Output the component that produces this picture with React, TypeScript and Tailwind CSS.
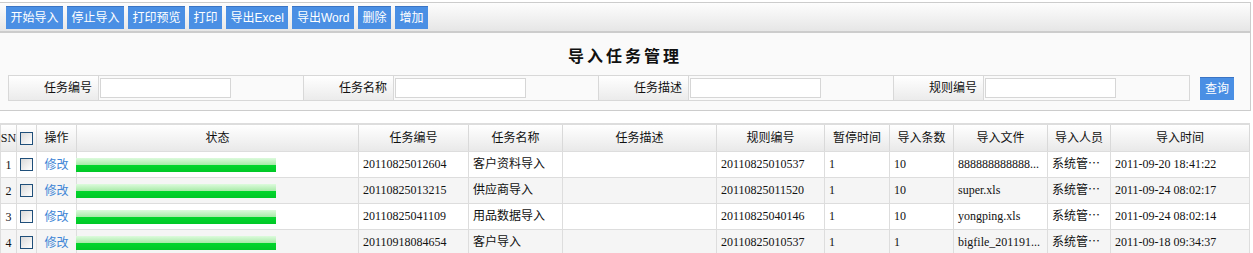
const toolButtons = ["开始导入", "停止导入", "打印预览", "打印", "导出Excel", "导出Word", "删除", "增加"];

const searchFields = ["任务编号", "任务名称", "任务描述", "规则编号"];

const columns = [
  { label: "SN", w: "w-[16px]" },
  { label: "", w: "w-[20px]" },
  { label: "操作", w: "w-[40px]" },
  { label: "状态", w: "w-[282px]" },
  { label: "任务编号", w: "w-[110px]" },
  { label: "任务名称", w: "w-[94px]" },
  { label: "任务描述", w: "w-[154px]" },
  { label: "规则编号", w: "w-[108px]" },
  { label: "暂停时间", w: "w-[65px]" },
  { label: "导入条数", w: "w-[64px]" },
  { label: "导入文件", w: "w-[94px]" },
  { label: "导入人员", w: "w-[63px]" },
  { label: "导入时间", w: "w-[139px]" },
];

// file and user names are already shortened the way the grid shows them
const rows = [
  { code: "20110825012604", name: "客户资料导入", rule: "20110825010537", pause: "1", count: "10", file: "888888888888...", user: "系统管⋯", time: "2011-09-20 18:41:22" },
  { code: "20110825013215", name: "供应商导入", rule: "20110825011520", pause: "1", count: "10", file: "super.xls", user: "系统管⋯", time: "2011-09-24 08:02:17" },
  { code: "20110825041109", name: "用品数据导入", rule: "20110825040146", pause: "1", count: "10", file: "yongping.xls", user: "系统管⋯", time: "2011-09-24 08:02:14" },
  { code: "20110918084654", name: "客户导入", rule: "20110825010537", pause: "1", count: "1", file: "bigfile_201191...", user: "系统管⋯", time: "2011-09-18 09:34:37" },
];

function CheckBox() {
  return (
    <div className="w-[13px] h-[13px] border border-[#1f4f7a] bg-[linear-gradient(135deg,#d9d9d9,#ffffff)]" />
  );
}

export default function App() {
  return (
    <div className="w-[1253px] h-[253px] overflow-hidden bg-white text-[12px] text-[#111] font-['Liberation_Sans','Noto_Sans_CJK_SC',sans-serif]">
      {/* toolbar */}
      <div className="mt-[2px] w-[1251px] h-[31px] border-t border-r border-b-2 border-[#cccccc] bg-[linear-gradient(to_bottom,#fdfdfd,#e6e6e6)] flex items-start gap-[4px] pl-[6px] pt-[3px]">
        {toolButtons.map((b) => (
          <div
            key={b}
            className="h-[23px] px-[4.5px] flex items-center bg-[#4a8fe4] border-t border-[#3a74c4] text-white leading-none"
          >
            {b}
          </div>
        ))}
      </div>

      {/* search panel */}
      <div className="w-[1251px] h-[78px] border-r border-b border-[#cccccc] bg-[#fafafa] pt-[14px]">
        <div className="h-[20px] leading-[20px] text-center text-[16px] font-bold tracking-[3px]">导入任务管理</div>
        <div className="mt-[8px] flex items-center">
          <div className="ml-[8px] flex border border-[#d8d8d8] h-[26px]">
            {searchFields.map((f, i) => (
              <div key={f} className="flex">
                <div className="w-[90px] border-r border-[#d8d8d8] bg-[linear-gradient(to_bottom,#ffffff,#ebebeb)] flex items-center justify-end pr-[6px]">
                  {f}
                </div>
                <div className={`w-[205px] flex items-center pl-[1px] ${i < 3 ? "border-r border-[#d8d8d8]" : ""}`}>
                  <div className="w-[131px] h-[20px] border border-[#d6d6d6] bg-white" />
                </div>
              </div>
            ))}
          </div>
          <div className="ml-[10px] h-[23px] px-[5px] flex items-center bg-[#4a8fe4] border-t border-[#3a74c4] text-white leading-none">
            查询
          </div>
        </div>
      </div>

      {/* grid */}
      <div className="mt-[12px] w-[1250px] border-t-2 border-l border-[#dddddd] font-['Liberation_Serif','Noto_Sans_CJK_SC',serif]">
        <div className="flex h-[26px] bg-[linear-gradient(to_bottom,#ffffff,#e9e9e9)]">
          {columns.map((c, i) => (
            <div
              key={i}
              className={`${c.w} shrink-0 border-r border-[#d9d9d9] flex items-center justify-center overflow-hidden whitespace-nowrap`}
            >
              {i === 1 ? <CheckBox /> : c.label}
            </div>
          ))}
        </div>
        {rows.map((r, idx) => (
          <div
            key={r.code}
            className={`flex h-[26px] border-t border-[#dddddd] ${idx % 2 === 1 ? "bg-[#f5f5f5]" : "bg-white"}`}
          >
            <div className="w-[16px] shrink-0 border-r border-[#dddddd] flex items-center justify-center">{idx + 1}</div>
            <div className="w-[20px] shrink-0 border-r border-[#dddddd] flex items-center justify-center">
              <CheckBox />
            </div>
            <div className="w-[40px] shrink-0 border-r border-[#dddddd] flex items-center justify-center text-[#3f86d6]">修改</div>
            <div className="w-[282px] shrink-0 border-r border-[#dddddd] flex items-center">
              <div className="-ml-px w-[200px] h-[14px] bg-[linear-gradient(to_bottom,#ddfbdd_0%,#a7eaa7_50%,#02d62c_50%,#00c827_100%)]" />
            </div>
            {[
              { v: r.code, w: "w-[110px]" },
              { v: r.name, w: "w-[94px]" },
              { v: "", w: "w-[154px]" },
              { v: r.rule, w: "w-[108px]" },
              { v: r.pause, w: "w-[65px]" },
              { v: r.count, w: "w-[64px]" },
              { v: r.file, w: "w-[94px]" },
              { v: r.user, w: "w-[63px]" },
              { v: r.time, w: "w-[139px]" },
            ].map((c, j) => (
              <div
                key={j}
                className={`${c.w} shrink-0 border-r border-[#dddddd] pl-[4px] leading-[25px] whitespace-nowrap`}
              >
                {c.v}
              </div>
            ))}
          </div>
        ))}
      </div>
    </div>
  );
}
